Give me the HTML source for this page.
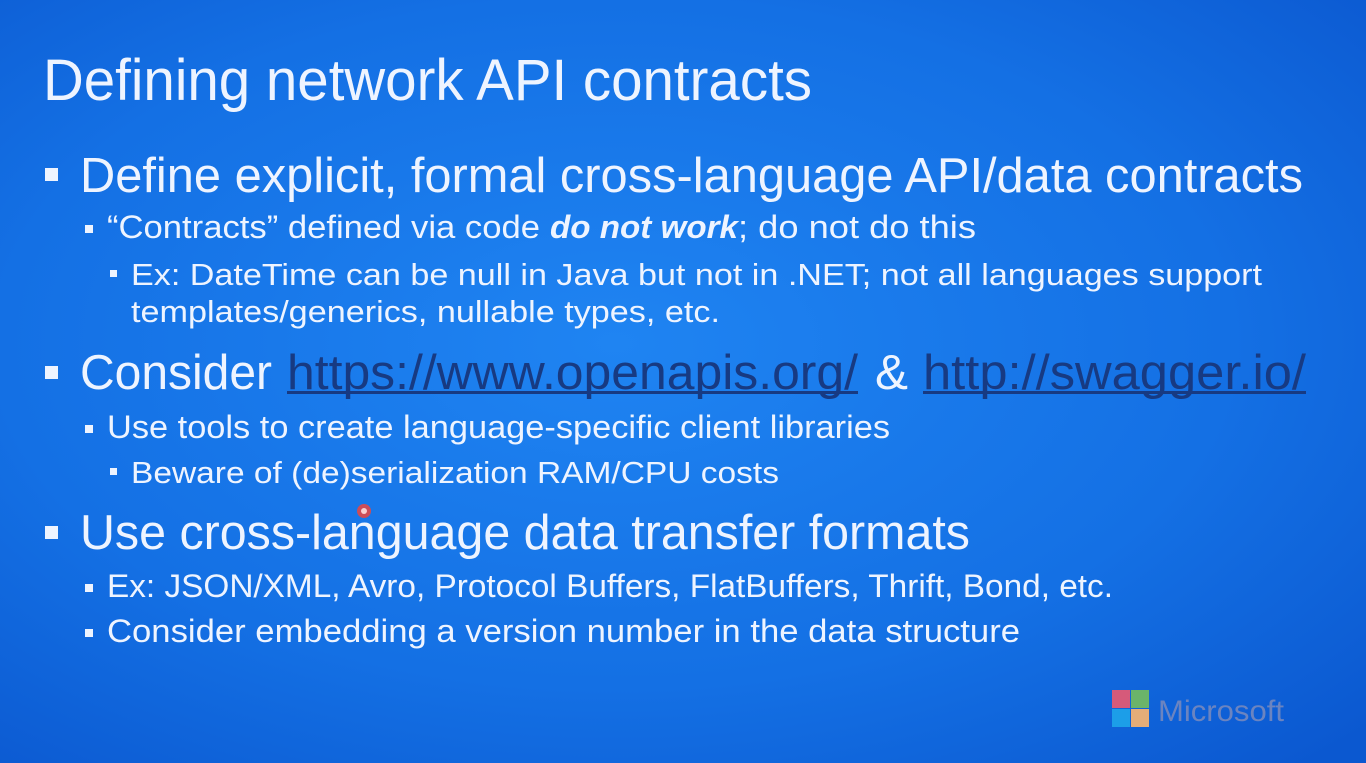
<!DOCTYPE html>
<html><head><meta charset="utf-8"><style>
html,body{margin:0;padding:0;width:1366px;height:763px;overflow:hidden;background:#1570e2}
svg{display:block}
text{font-family:"Liberation Sans",sans-serif;fill:#eef4ff}
</style></head><body>
<svg width="1366" height="763" viewBox="0 0 1366 763" xmlns="http://www.w3.org/2000/svg">
<defs>
<radialGradient id="bg" cx="45%" cy="45%" r="75%">
<stop offset="0" stop-color="#1f84f2"/>
<stop offset="0.6" stop-color="#1470e4"/>
<stop offset="1" stop-color="#0b58d0"/>
</radialGradient>
</defs>
<rect width="1366" height="763" fill="url(#bg)"/>
<text x="43" y="100" font-size="58" textLength="769" lengthAdjust="spacingAndGlyphs">Defining network API contracts</text>

<rect x="45" y="168" width="13" height="13" fill="#eef4ff"/>
<text x="80" y="192" font-size="49" textLength="1223" lengthAdjust="spacingAndGlyphs">Define explicit, formal cross-language API/data contracts</text>

<rect x="85" y="225" width="8" height="8" fill="#eef4ff"/>
<text x="107" y="238" font-size="32" textLength="433" lengthAdjust="spacingAndGlyphs">“Contracts” defined via code</text>
<text x="550" y="238" font-size="32" font-weight="bold" font-style="italic" textLength="188" lengthAdjust="spacingAndGlyphs">do not work</text>
<text x="738" y="238" font-size="32" textLength="238" lengthAdjust="spacingAndGlyphs">; do not do this</text>

<rect x="110" y="270" width="7" height="7" fill="#eef4ff"/>
<text x="131" y="285" font-size="31" textLength="1131" lengthAdjust="spacingAndGlyphs">Ex: DateTime can be null in Java but not in .NET; not all languages support</text>
<text x="131" y="322" font-size="31" textLength="589" lengthAdjust="spacingAndGlyphs">templates/generics, nullable types, etc.</text>

<rect x="45" y="366" width="13" height="13" fill="#eef4ff"/>
<text x="80" y="389" font-size="49" textLength="192" lengthAdjust="spacingAndGlyphs">Consider</text>
<text x="287" y="389" font-size="49" textLength="571" lengthAdjust="spacingAndGlyphs" style="fill:#173a82">https://www.openapis.org/</text>
<rect x="287" y="391" width="571" height="3" fill="#173a82"/>
<text x="875" y="389" font-size="49" textLength="33" lengthAdjust="spacingAndGlyphs">&amp;</text>
<text x="923" y="389" font-size="49" textLength="383" lengthAdjust="spacingAndGlyphs" style="fill:#173a82">http://swagger.io/</text>
<rect x="923" y="391" width="383" height="3" fill="#173a82"/>

<rect x="85" y="425" width="8" height="8" fill="#eef4ff"/>
<text x="107" y="438" font-size="32" textLength="783" lengthAdjust="spacingAndGlyphs">Use tools to create language-specific client libraries</text>

<rect x="110" y="468" width="7" height="7" fill="#eef4ff"/>
<text x="131" y="483" font-size="31" textLength="648" lengthAdjust="spacingAndGlyphs">Beware of (de)serialization RAM/CPU costs</text>

<rect x="45" y="526" width="13" height="13" fill="#eef4ff"/>
<text x="80" y="549" font-size="49" textLength="890" lengthAdjust="spacingAndGlyphs">Use cross-language data transfer formats</text>

<rect x="85" y="584" width="8" height="8" fill="#eef4ff"/>
<text x="107" y="597" font-size="32" textLength="1006" lengthAdjust="spacingAndGlyphs">Ex: JSON/XML, Avro, Protocol Buffers, FlatBuffers, Thrift, Bond, etc.</text>

<rect x="85" y="629" width="8" height="8" fill="#eef4ff"/>
<text x="107" y="642" font-size="32" textLength="913" lengthAdjust="spacingAndGlyphs">Consider embedding a version number in the data structure</text>

<circle cx="364" cy="511" r="7" fill="#e04848" opacity="0.9"/>
<circle cx="364" cy="511" r="3" fill="#f8d0d0"/>

<rect x="1112" y="690" width="18" height="18" fill="#d65a7a"/>
<rect x="1131" y="690" width="18" height="18" fill="#6bb46a"/>
<rect x="1112" y="709" width="18" height="18" fill="#1c9ee8"/>
<rect x="1131" y="709" width="18" height="18" fill="#e4ad78"/>
<text x="1158" y="721" font-size="30" textLength="126" lengthAdjust="spacingAndGlyphs" style="fill:#6b84c0">Microsoft</text>
</svg>
</body></html>
